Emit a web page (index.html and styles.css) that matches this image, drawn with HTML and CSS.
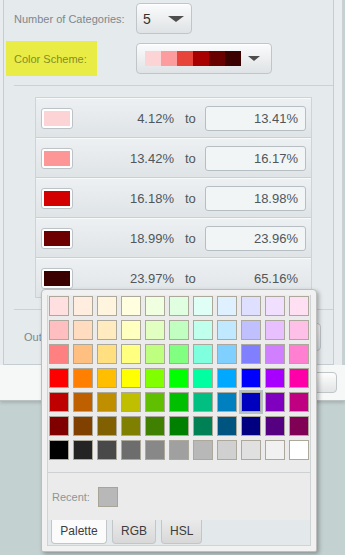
FILE: index.html
```html
<!DOCTYPE html>
<html lang="en">
<head>
    <meta charset="UTF-8">
    <meta name="viewport" content="width=device-width, initial-scale=1.0">
    <title>Classification</title>
    <link rel="stylesheet" href="styles.css">
</head>
<body>
    <div class="dialog">
        <div class="dialog-main">
            <div class="panel">
                <div class="field-row">
                    <div class="field-label">Number of Categories:</div>
                    <div class="combo combo-count">
                        <span class="combo-value">5</span>
                        <span class="combo-arrow"></span>
                    </div>
                </div>
                <div class="field-row scheme-row">
                    <div class="field-label"><span class="highlight">Color Scheme:</span></div>
                    <div class="combo combo-scheme">
                        <div class="ramp">
                            <span style="background:#fdd4d6"></span>
                            <span style="background:#fd9c9e"></span>
                            <span style="background:#e8453a"></span>
                            <span style="background:#a80000"></span>
                            <span style="background:#690000"></span>
                            <span style="background:#3b0000"></span>
                        </div>
                        <span class="combo-arrow small"></span>
                    </div>
                </div>

                <div class="divider"></div>

                <div class="class-table">
                    <div class="class-row">
                        <div class="swatch"><span style="background:#fdd4d6"></span></div>
                        <div class="from">4.12%</div>
                        <div class="to">to</div>
                        <div class="upper">13.41%</div>
                    </div>
                    <div class="class-row">
                        <div class="swatch"><span style="background:#fd9797"></span></div>
                        <div class="from">13.42%</div>
                        <div class="to">to</div>
                        <div class="upper">16.17%</div>
                    </div>
                    <div class="class-row">
                        <div class="swatch"><span style="background:#d20000"></span></div>
                        <div class="from">16.18%</div>
                        <div class="to">to</div>
                        <div class="upper">18.98%</div>
                    </div>
                    <div class="class-row">
                        <div class="swatch"><span style="background:#6c0000"></span></div>
                        <div class="from">18.99%</div>
                        <div class="to">to</div>
                        <div class="upper">23.96%</div>
                    </div>
                    <div class="class-row">
                        <div class="swatch"><span style="background:#3a0000"></span></div>
                        <div class="from">23.97%</div>
                        <div class="to">to</div>
                        <div class="upper plain">65.16%</div>
                    </div>
                </div>

                <div class="divider"></div>

                <div class="outline-row">
                    <div class="outline-label">Outline:</div>
                    <div class="combo combo-outline"></div>
                </div>
            </div>
        </div>
        <div class="footer">
            <div class="footer-button">OK</div>
        </div>
    </div>

    <div class="color-menu">
        <div class="color-menu-inner">
            <div class="palette" id="palette"></div>
            <div class="recent">
                <span class="recent-label">Recent:</span>
                <span class="recent-swatch"></span>
            </div>
            <div class="tab-strip">
                <div class="tab active">Palette</div>
                <div class="tab">RGB</div>
                <div class="tab">HSL</div>
            </div>
        </div>
    </div>

    <script>
        // palette colours, one row per lightness step
        const paletteRows = [
            ['#ffdfe0', '#ffeedf', '#fff5df', '#ffffdf', '#efffdf', '#dfffe0', '#dffff6', '#dff1ff', '#dfdfff', '#f1dfff', '#ffdff2'],
            ['#ffbfc0', '#ffdcbf', '#ffebbf', '#ffffc0', '#e0ffc0', '#c0ffc0', '#c0ffec', '#c0e8ff', '#c0c0ff', '#e8c0ff', '#ffc0e8'],
            ['#ff8080', '#ffbf80', '#ffdf80', '#ffff80', '#bfff80', '#80ff80', '#80ffdf', '#80d0ff', '#8080ff', '#d080ff', '#ff80d0'],
            ['#ff0000', '#ff8000', '#ffbf00', '#ffff00', '#80ff00', '#00ff00', '#00ffa0', '#00a8ff', '#0000ff', '#a800ff', '#ff00a8'],
            ['#bf0000', '#bf6000', '#bf8f00', '#bfbf00', '#60bf00', '#00bf00', '#00bf80', '#0080bf', '#0000bf', '#8000bf', '#bf0080'],
            ['#800000', '#804000', '#806000', '#808000', '#408000', '#008000', '#008055', '#005580', '#000080', '#550080', '#800055'],
            ['#000000', '#242424', '#494949', '#6d6d6d', '#888888', '#a0a0a0', '#b8b8b8', '#d0d0d0', '#e0e0e0', '#f1f1f1', '#ffffff']
        ];

        const palette = document.getElementById('palette');
        paletteRows.forEach((row, r) => {
            row.forEach((color, c) => {
                const cell = document.createElement('span');
                cell.className = 'cell';
                if (r === 4 && c === 8) cell.classList.add('selected');
                cell.style.background = color;
                palette.appendChild(cell);
            });
        });
    </script>
</body>
</html>
```

FILE: styles.css
```css
* {
    margin: 0;
    padding: 0;
    box-sizing: border-box;
}

html, body {
    width: 345px;
    height: 555px;
    overflow: hidden;
}

body {
    position: relative;
    background-color: #c4d1d1;
    font-family: 'Liberation Sans', Arial, sans-serif;
    font-size: 11px;
    color: #52585c;
}

.dialog {
    width: 345px;
    box-shadow: 0 2px 3px rgba(0, 0, 0, 0.15);
}

.dialog-main {
    width: 343px;
    padding-left: 3px;
    background-color: #e8ecee;
    border-right: 1px solid #c9cfd2;
}

.panel {
    width: 331px;
    padding: 3px 0 13px 10px;
    background-color: #e5eaec;
    border: 1px solid #c6cdd1;
    border-top: none;
}

.field-row {
    display: flex;
    align-items: center;
}

.field-label {
    width: 122px;
    display: flex;
    align-items: center;
    color: #80878c;
}

.scheme-row {
    margin-top: 7px;
}

.highlight {
    display: flex;
    align-items: center;
    width: 91px;
    height: 35px;
    margin-left: -8px;
    padding-left: 8px;
    background-color: #e8ec44;
    color: #858c2a;
}

.combo {
    display: flex;
    align-items: center;
    justify-content: space-between;
    height: 31px;
    border: 1px solid #bfc5c9;
    border-radius: 4px;
    background: linear-gradient(#fbfbfc, #dfe3e5);
    box-shadow: inset 0 1px 0 #fff;
}

.combo-count {
    width: 56px;
    padding: 0 7px 0 6px;
}

.combo-value {
    font-size: 14px;
    color: #333;
}

.combo-arrow {
    width: 0;
    height: 0;
    border-left: 8px solid transparent;
    border-right: 8px solid transparent;
    border-top: 6px solid #4e4e4e;
}

.combo-arrow.small {
    border-left-width: 6px;
    border-right-width: 6px;
    border-top-width: 5px;
}

.combo-scheme {
    width: 136px;
    padding: 0 11px 0 8px;
}

.ramp {
    display: flex;
}

.ramp span {
    width: 16px;
    height: 15px;
}

.divider {
    height: 1px;
    margin-top: 9px;
    background-color: #cbd1d4;
}

.class-table {
    width: 277px;
    margin: 11px 0 0 21px;
    border: 1px solid #cdd3d6;
    border-bottom: none;
}

.class-row {
    display: flex;
    align-items: center;
    height: 40px;
    padding-left: 5px;
    font-size: 13px;
    color: #50565a;
    background: linear-gradient(#edf0f2, #dfe4e6);
    border-top: 1px solid #f8fafa;
    border-bottom: 1px solid #c9d0d3;
}

.swatch {
    width: 32px;
    height: 21px;
    padding: 2px;
    border: 1px solid #bcc2c6;
    border-radius: 3px;
    background-color: #fff;
}

.swatch span {
    display: block;
    width: 100%;
    height: 100%;
}

.from {
    width: 101px;
    text-align: right;
}

.to {
    width: 20px;
    margin-left: 11px;
}

.upper {
    width: 101px;
    height: 25px;
    line-height: 23px;
    padding-right: 7px;
    text-align: right;
    background-color: #f2f5f6;
    border: 1px solid #b7bec2;
    border-radius: 3px;
}

.upper.plain {
    background: none;
    border-color: transparent;
}

.class-table + .divider {
    margin-top: 11px;
}

.outline-row {
    display: flex;
    align-items: center;
    justify-content: space-between;
    margin-top: 13px;
    padding: 0 12px 0 10px;
}

.outline-label {
    color: #80878c;
}

.combo-outline {
    width: 130px;
    height: 28px;
}

.footer {
    display: flex;
    justify-content: flex-end;
    height: 36px;
    padding: 7px 8px 0 0;
    background-color: #f6f7f7;
    border-bottom: 1px solid #b9c1c1;
}

.footer-button {
    width: 70px;
    height: 21px;
    line-height: 19px;
    text-align: center;
    border: 1px solid #c0c5c8;
    border-radius: 4px;
    background: linear-gradient(#fdfdfd, #e2e4e5);
    color: #444;
}

/* colour picker menu lies over the dialog */
.color-menu {
    position: absolute;
    left: 41px;
    top: 289px;
    width: 276px;
    height: 263px;
    padding: 5px;
    background-color: #f1f1f1;
    border: 1px solid #bdbdbd;
    border-radius: 4px 4px 2px 2px;
    box-shadow: 2px 2px 4px rgba(0, 0, 0, 0.3);
}

.color-menu-inner {
    display: flex;
    flex-direction: column;
    height: 100%;
    background-color: #ebebeb;
    border: 1px solid #d0d3d3;
    border-top: none;
}

.palette {
    display: grid;
    grid-template-columns: repeat(11, 20px);
    grid-auto-rows: 20px;
    gap: 4px;
    padding: 1px 1px 12px;
}

.cell {
    border: 1px solid #aca89c;
}

.cell.selected {
    box-shadow: 0 0 0 2px #b5c1c5;
}

.recent {
    display: flex;
    align-items: center;
    gap: 8px;
    height: 48px;
    padding-left: 4px;
    border-top: 1px solid #cdd1d1;
}

.recent-label {
    color: #8c9699;
}

.recent-swatch {
    width: 20px;
    height: 20px;
    background-color: #b8b8b8;
    border: 1px solid #a8a498;
}

.tab-strip {
    flex: 1;
    display: flex;
    gap: 5px;
    padding-left: 3px;
    background-color: #e3e8ea;
}

.tab {
    height: 24px;
    line-height: 23px;
    padding: 0 8px;
    font-size: 12px;
    color: #3c3c3c;
    border: 1px solid #c2c6c8;
    border-top: none;
    border-radius: 0 0 4px 4px;
    background: linear-gradient(#eaeaea, #d8d8d8);
}

.tab.active {
    width: 56px;
    text-align: center;
    background: #fbfbfb;
}
```
